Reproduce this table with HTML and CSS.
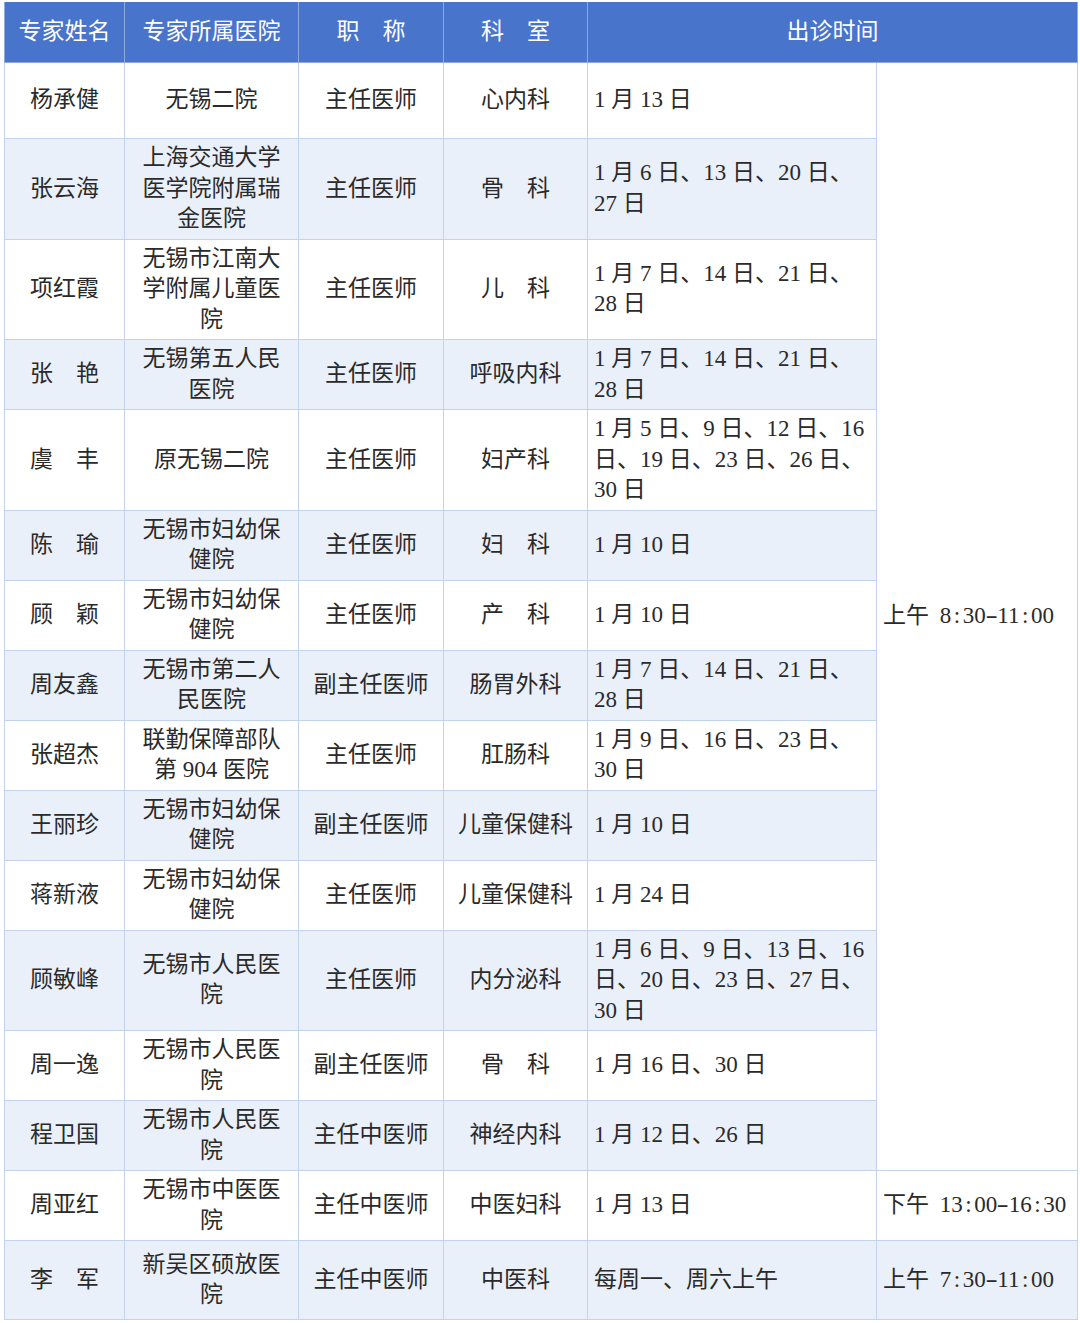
FILE: index.html
```html
<!DOCTYPE html>
<html lang="zh-CN">
<head>
<meta charset="utf-8">
<link rel="stylesheet" href="styles.css">
</head>
<body>
<table class="sched">
<colgroup>
<col class="c-name"><col class="c-hosp"><col class="c-title"><col class="c-dept"><col class="c-date"><col class="c-time">
</colgroup>
<thead>
<tr class="head"><th>专家姓名</th><th>专家所属医院</th><th>职　称</th><th>科　室</th><th colspan="2">出诊时间</th></tr>
</thead>
<tbody>
<tr class="r1"><td>杨承健</td><td>无锡二院</td><td>主任医师</td><td>心内科</td><td class="date">1 月 13 日</td><td class="time span" rowspan="14">上午 8<span class="hw">:</span>30<span class="hw dash">-</span>11<span class="hw">:</span>00</td></tr>
<tr class="alt"><td>张云海</td><td>上海交通大学医学院附属瑞金医院</td><td>主任医师</td><td>骨　科</td><td class="date">1 月 6 日、13 日、20 日、27 日</td></tr>
<tr><td>项红霞</td><td>无锡市江南大学附属儿童医院</td><td>主任医师</td><td>儿　科</td><td class="date">1 月 7 日、14 日、21 日、28 日</td></tr>
<tr class="alt"><td>张　艳</td><td>无锡第五人民医院</td><td>主任医师</td><td>呼吸内科</td><td class="date">1 月 7 日、14 日、21 日、28 日</td></tr>
<tr><td>虞　丰</td><td>原无锡二院</td><td>主任医师</td><td>妇产科</td><td class="date">1 月 5 日、9 日、12 日、16 日、19 日、23 日、26 日、30 日</td></tr>
<tr class="alt"><td>陈　瑜</td><td>无锡市妇幼保健院</td><td>主任医师</td><td>妇　科</td><td class="date">1 月 10 日</td></tr>
<tr><td>顾　颖</td><td>无锡市妇幼保健院</td><td>主任医师</td><td>产　科</td><td class="date">1 月 10 日</td></tr>
<tr class="alt"><td>周友鑫</td><td>无锡市第二人民医院</td><td>副主任医师</td><td>肠胃外科</td><td class="date">1 月 7 日、14 日、21 日、28 日</td></tr>
<tr><td>张超杰</td><td>联勤保障部队第 904 医院</td><td>主任医师</td><td>肛肠科</td><td class="date">1 月 9 日、16 日、23 日、30 日</td></tr>
<tr class="alt"><td>王丽珍</td><td>无锡市妇幼保健院</td><td>副主任医师</td><td>儿童保健科</td><td class="date">1 月 10 日</td></tr>
<tr><td>蒋新液</td><td>无锡市妇幼保健院</td><td>主任医师</td><td>儿童保健科</td><td class="date">1 月 24 日</td></tr>
<tr class="alt"><td>顾敏峰</td><td>无锡市人民医院</td><td>主任医师</td><td>内分泌科</td><td class="date">1 月 6 日、9 日、13 日、16 日、20 日、23 日、27 日、30 日</td></tr>
<tr><td>周一逸</td><td>无锡市人民医院</td><td>副主任医师</td><td>骨　科</td><td class="date">1 月 16 日、30 日</td></tr>
<tr class="alt"><td>程卫国</td><td>无锡市人民医院</td><td>主任中医师</td><td>神经内科</td><td class="date">1 月 12 日、26 日</td></tr>
<tr><td>周亚红</td><td>无锡市中医医院</td><td>主任中医师</td><td>中医妇科</td><td class="date">1 月 13 日</td><td class="time">下午 13<span class="hw">:</span>00<span class="hw dash">-</span>16<span class="hw">:</span>30</td></tr>
<tr class="alt last"><td>李　军</td><td>新吴区硕放医院</td><td>主任中医师</td><td>中医科</td><td class="date">每周一、周六上午</td><td class="time">上午 7<span class="hw">:</span>30<span class="hw dash">-</span>11<span class="hw">:</span>00</td></tr>
</tbody>
</table>
</body>
</html>
```

FILE: styles.css
```css
html, body {
  margin: 0;
  padding: 0;
  background: #ffffff;
}
body {
  padding: 2px 0 0 4px;
}
.sched {
  border-collapse: collapse;
  table-layout: fixed;
  width: 1073px;
  font-family: "Liberation Serif", "Noto Sans CJK SC", serif;
  font-size: 23px;
  line-height: 30.5px;
  color: #2a2a2a;
}
.c-name { width: 120px; }
.c-hosp { width: 174px; }
.c-title { width: 145px; }
.c-dept { width: 144px; }
.c-date { width: 289px; }
.c-time { width: 201px; }

.sched th {
  background: #4874cb;
  color: #ffffff;
  font-weight: normal;
  height: 60px;
  padding: 0;
  text-align: center;
  border: 1px solid #8eaadf;
  border-top: none;
}
.sched td {
  border: 1px solid #c3d3ee;
  padding: 4px 10px;
  text-align: center;
  vertical-align: middle;
  background: #ffffff;
}
.sched tr.alt td {
  background: #eaf0f9;
}
.sched tr.alt td.span { background: #ffffff; }
.sched td.date {
  text-align: left;
  padding: 4px 6px 4px 6px;
}
.sched td.time {
  text-align: left;
  padding: 4px 2px 4px 6px;
  white-space: nowrap;
  word-spacing: 5px;
}
.hw {
  display: inline-block;
  width: 11.5px;
  text-align: center;
}
.hw.dash {
  transform: scaleX(1.6);
}
.sched tr.r1 { height: 76px; }
.sched tr.last { height: 79px; }
```
